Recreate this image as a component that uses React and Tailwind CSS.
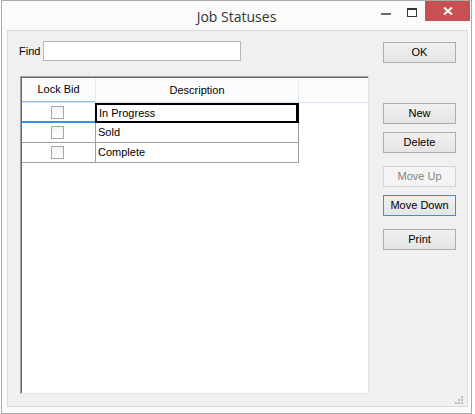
import React from 'react';

const rows = [
    { id: 1, text: 'In Progress', focused: true },
    { id: 2, text: 'Sold' },
    { id: 3, text: 'Complete' },
];

const Button = ({ label, disabled, active, className = '' }) => (
    <button
        disabled={disabled}
        className={
            'w-[73px] h-[21px] border text-[11px] leading-none bg-gradient-to-b ' +
            (disabled
                ? 'border-[#d5d5d5] text-[#838383] from-[#f4f4f4] to-[#f4f4f4] '
                : active
                ? 'border-[#3c8ce8] text-black from-[#f0f0f0] to-[#e5e5e5] '
                : 'border-[#adadad] text-black from-[#f0f0f0] to-[#e5e5e5] ') +
            className
        }
    >
        {label}
    </button>
);

const App = () => {
    return (
        <div className="w-[475px] h-[414px] bg-white overflow-hidden" style={{ fontFamily: '"Liberation Sans", Arial, sans-serif' }}>
            <div className="ml-px w-[471px] h-[414px] border border-[#ababab] bg-[#fbfbfb] flex flex-col">
                {/* title bar */}
                <div className="h-[29px] grid grid-cols-[1fr_auto_1fr]">
                    <div></div>
                    <div
                        className="pt-[5px] text-[14px] text-[#333333]"
                        style={{ fontFamily: '"Open Sans", "Noto Sans", sans-serif' }}
                    >
                        Job Statuses
                    </div>
                    <div className="flex justify-end items-start mr-[1px]">
                        <div className="w-[26px] h-[20px] flex items-center justify-center">
                            <div className="w-[10px] h-[2px] bg-[#6b6b6b] mt-[6px]"></div>
                        </div>
                        <div className="w-[26px] h-[20px] flex items-center justify-center">
                            <div className="w-[10px] h-[9px] border border-t-2 border-[#333333] mt-[2px]"></div>
                        </div>
                        <div className="w-[45px] h-[20px] bg-[#c75050] flex items-center justify-center">
                            <svg width="10" height="8" viewBox="0 0 10 8">
                                <path d="M1 0.5 L9 7.5 M9 0.5 L1 7.5" stroke="white" strokeWidth="2" />
                            </svg>
                        </div>
                    </div>
                </div>

                {/* client area */}
                <div className="relative ml-[5px] w-[461px] h-[377px] border border-[#dadada] bg-[#f0f0f0] flex">
                    <div className="flex flex-col">
                        <div className="flex items-center mt-[10px] ml-[11px] h-[20px]">
                            <span className="text-[11px] text-black w-[24px]">Find</span>
                            <div className="w-[198px] h-[20px] border border-[#b5b5b5] bg-white"></div>
                        </div>
                        <div className="mt-[15px] ml-[12px] w-[349px] h-[318px] border-t border-l border-r border-b border-t-[#a0a0a0] border-l-[#a0a0a0] border-r-[#e3e3e3] border-b-[#e3e3e3]">
                            <div className="w-full h-full bg-white border-t border-l border-[#696969]">
                                {/* header */}
                                <div className="flex h-[25px] bg-[#fcfcfc] border-b border-[#d9e6f6] text-[11px] text-black">
                                    <div className="w-[74px] flex items-center justify-center border-r border-[#e3ecf7] border-b border-b-[#8db8ea]">Lock Bid</div>
                                    <div className="w-[203px] flex items-center justify-center border-r border-[#e3ecf7]">Description</div>
                                    <div className="flex-1"></div>
                                </div>
                                {rows.map((r, i) => (
                                    <div key={r.id} className="flex h-[20px] text-[11px] text-black">
                                        <div
                                            className={
                                                'w-[74px] flex items-center justify-center border-r border-[#a0a0a0] ' +
                                                (i === 0 ? 'border-b-2 border-b-[#3c8ee6]' : 'border-b border-b-[#a0a0a0]')
                                            }
                                        >
                                            <div className="w-[13px] h-[13px] -ml-[2px] border border-[#a6a6a6] bg-gradient-to-b from-[#f4f4f4] to-[#fefefe]"></div>
                                        </div>
                                        <div
                                            className={
                                                'w-[204px] flex items-center -ml-px ' +
                                                (r.focused
                                                    ? 'border-2 border-r-[3px] border-black pl-[2px]'
                                                    : 'border-r border-b border-[#a0a0a0] pl-[3px]')
                                            }
                                        >
                                            {r.text}
                                        </div>
                                    </div>
                                ))}
                            </div>
                        </div>
                    </div>

                    <div className="flex flex-col ml-[14px] mt-[11px]">
                        <Button label="OK" />
                        <Button label="New" className="mt-[40px]" />
                        <Button label="Delete" className="mt-[8px]" />
                        <Button label="Move Up" disabled className="mt-[13px]" />
                        <Button label="Move Down" active className="mt-[8px]" />
                        <Button label="Print" className="mt-[13px]" />
                    </div>

                    {/* size grip */}
                    <svg className="absolute right-[3px] bottom-[1px]" width="9" height="9" viewBox="0 0 9 9">
                        <rect x="6" y="0" width="2" height="2" fill="#bcbcbc" />
                        <rect x="3" y="3" width="2" height="2" fill="#bcbcbc" />
                        <rect x="6" y="3" width="2" height="2" fill="#bcbcbc" />
                        <rect x="0" y="6" width="2" height="2" fill="#bcbcbc" />
                        <rect x="3" y="6" width="2" height="2" fill="#bcbcbc" />
                        <rect x="6" y="6" width="2" height="2" fill="#bcbcbc" />
                    </svg>
                </div>
            </div>
        </div>
    );
};

export default App;
